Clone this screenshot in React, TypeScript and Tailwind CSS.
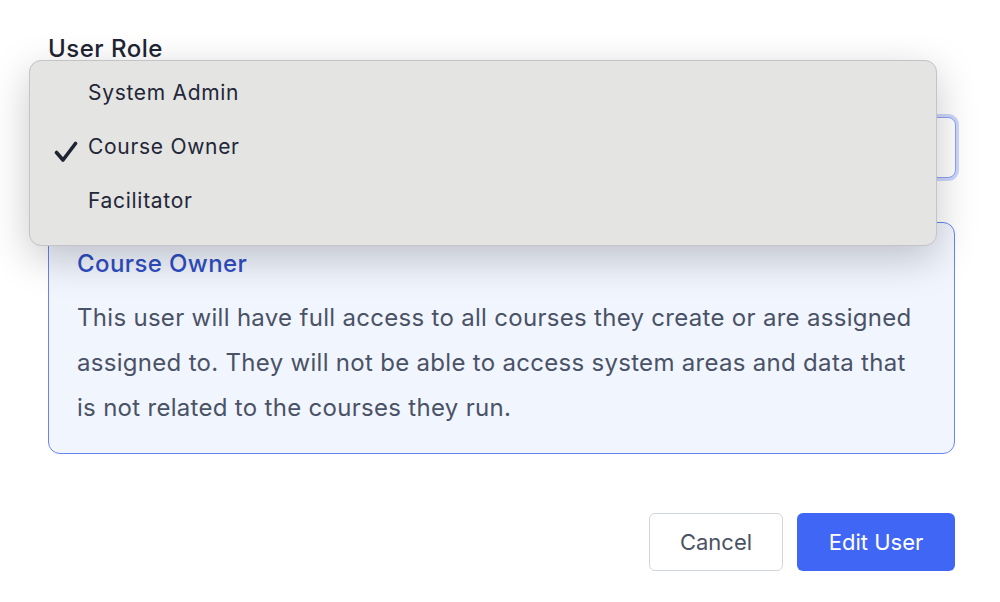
const ROLES = ['System Admin', 'Course Owner', 'Facilitator'];

function Check() {
  return (
    <svg width="24" height="24" viewBox="0 0 24 24" fill="none" className="text-[#1f2433]">
      <path d="M2.5 12.5 L9 20 L21.5 3.5" stroke="currentColor" strokeWidth="3.6" strokeLinecap="round" strokeLinejoin="round" />
    </svg>
  );
}

export default function App() {
  const selected = 'Course Owner';
  return (
    <div className="relative h-[602px] w-[1000px] overflow-hidden bg-white font-['Inter',sans-serif]">
      <div className="px-[48px] pt-[33px]">
        <label className="block text-[24px] font-medium leading-[32px] tracking-[0.5px] text-[#1e2433]">User Role</label>
        <div className="mt-[52px] h-[61px] w-[908px] rounded-[8px] border border-[#8ea3f5] bg-white ring-[3px] ring-[#cdd7fb]" />

        <div className="mt-[44px] h-[232px] w-[907px] rounded-[12px] border border-[#6784f1] bg-[#f1f5fe] pl-[28px] pr-[30px] pt-[26px]">
          <h3 className="text-[24px] font-medium leading-[30px] tracking-[0.4px] text-[#2f4fc4]">Course Owner</h3>
          <p className="mt-[16px] text-[24px] leading-[45px] tracking-[0.3px] text-[#4a5266]">
            This user will have full access to all courses they create or are assigned
            assigned to. They will not be able to access system areas and data that
            is not related to the courses they run.
          </p>
        </div>

        <div className="mt-[59px] flex w-[907px] justify-end gap-[14px]">
          <button className="h-[58px] w-[134px] rounded-[6px] border border-[#cfd4dc] bg-white text-[22px] text-[#4b5263]">Cancel</button>
          <button className="h-[58px] w-[158px] rounded-[6px] bg-[#4066f6] text-[22px] text-white">Edit User</button>
        </div>
      </div>

      <div className="absolute left-[29px] top-[60px] h-[186px] w-[908px] rounded-[12px] border border-[#c3c3c8] bg-[#e4e4e3] pt-[12px] shadow-[0_12px_40px_rgba(0,0,0,0.22)]">
        {ROLES.map(r => (
          <div key={r} className="relative flex h-[54px] items-center pl-[58px] pb-[14px] text-[21px] tracking-[0.7px] text-[#222637]">
            {r === selected && (
              <span className="absolute left-[24px] top-[13px]"><Check /></span>
            )}
            {r}
          </div>
        ))}
      </div>
    </div>
  );
}
